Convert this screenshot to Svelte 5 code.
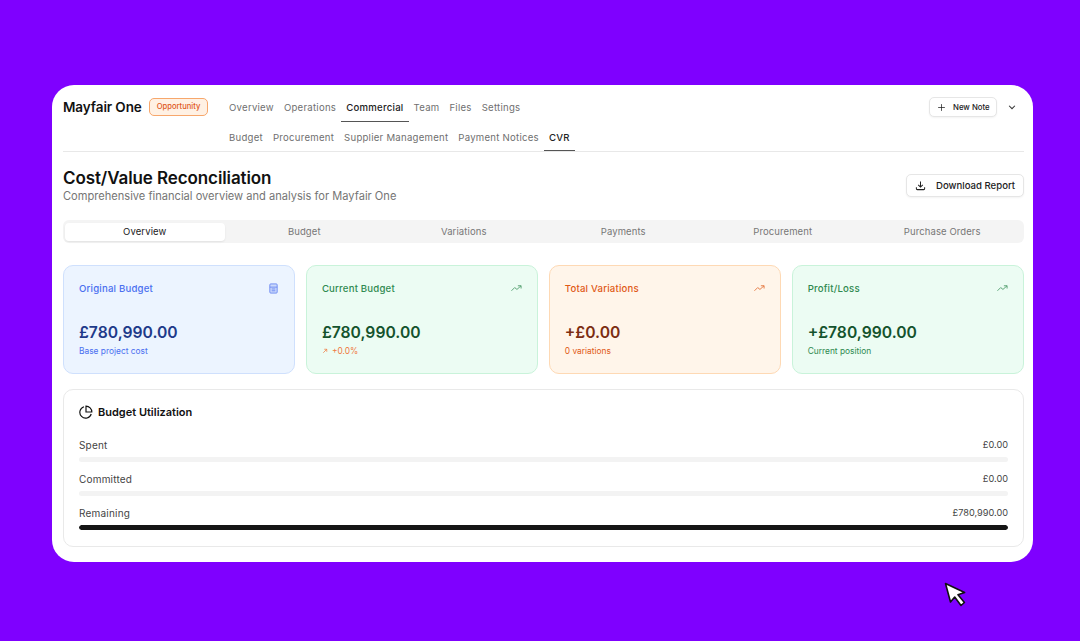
<script lang="ts">
  const mainNav = ['Overview', 'Operations', 'Commercial', 'Team', 'Files', 'Settings']
  const subNav = ['Budget', 'Procurement', 'Supplier Management', 'Payment Notices', 'CVR']
  const tabs = ['Overview', 'Budget', 'Variations', 'Payments', 'Procurement', 'Purchase Orders']

  const stats = [
    { tone: 'blue', label: 'Original Budget', value: '£780,990.00', note: 'Base project cost', icon: 'calc' },
    { tone: 'green', label: 'Current Budget', value: '£780,990.00', note: '+0.0%', icon: 'trend', up: true },
    { tone: 'orange', label: 'Total Variations', value: '+£0.00', note: '0 variations', icon: 'trend' },
    { tone: 'green', label: 'Profit/Loss', value: '+£780,990.00', note: 'Current position', icon: 'trend' }
  ]

  const usage = [
    { label: 'Spent', amount: '£0.00', pct: 0 },
    { label: 'Committed', amount: '£0.00', pct: 0 },
    { label: 'Remaining', amount: '£780,990.00', pct: 100 }
  ]
</script>

<div class="page">
  <main class="panel">
    <header class="top">
      <div class="top-row">
        <strong class="brand">Mayfair One</strong>
        <span class="badge">Opportunity</span>
        <nav class="nav">
          {#each mainNav as item}
            <span class="nav-item" class:active={item === 'Commercial'}>{item}</span>
          {/each}
        </nav>
        <button class="btn note">
          <svg width="9" height="9" viewBox="0 0 24 24" fill="none" stroke="currentColor" stroke-width="2"><path d="M12 3v18M3 12h18" /></svg>
          New Note
        </button>
        <svg class="chev" width="10" height="10" viewBox="0 0 24 24" fill="none" stroke="#333" stroke-width="2.5"><path d="M5 9l7 7 7-7" /></svg>
      </div>
      <nav class="nav sub">
        {#each subNav as item}
          <span class="nav-item" class:active={item === 'CVR'}>{item}</span>
        {/each}
      </nav>
    </header>

    <section class="heading">
      <div>
        <h1>Cost/Value Reconciliation</h1>
        <p>Comprehensive financial overview and analysis for Mayfair One</p>
      </div>
      <button class="btn download">
        <svg width="11" height="11" viewBox="0 0 24 24" fill="none" stroke="currentColor" stroke-width="2.2"><path d="M12 3v12M7 10.5l5 5 5-5M3 16v3a2 2 0 0 0 2 2h14a2 2 0 0 0 2-2v-3" /></svg>
        Download Report
      </button>
    </section>

    <div class="tabs">
      {#each tabs as tab}
        <span class="tab" class:active={tab === 'Overview'}>{tab}</span>
      {/each}
    </div>

    <div class="stats">
      {#each stats as s}
        <article class="stat {s.tone}">
          <div class="stat-head">
            <span>{s.label}</span>
            {#if s.icon === 'calc'}
              <svg class="ico" width="11" height="11" viewBox="0 0 24 24" fill="currentColor" fill-opacity="0.25" stroke="currentColor" stroke-width="2"><rect x="4" y="2" width="16" height="20" rx="2" /><path d="M4 9h16" /><path d="M8 13h8M8 17h8" /></svg>
            {:else}
              <svg class="ico" width="11" height="11" viewBox="0 0 24 24" fill="none" stroke="currentColor" stroke-width="2"><path d="M1 17l7-7 5 4 9-8" /><path d="M15 6h7v6" /></svg>
            {/if}
          </div>
          <div class="stat-value">{s.value}</div>
          <div class="stat-note" class:up={s.up}>
            {#if s.up}
              <svg width="6" height="6" viewBox="0 0 24 24" fill="none" stroke="currentColor" stroke-width="3"><path d="M5 19L19 5M9 5h10v10" /></svg>
            {/if}
            {s.note}
          </div>
        </article>
      {/each}
    </div>

    <section class="usage">
      <h2>
        <svg width="14" height="14" viewBox="0 0 24 24" fill="none" stroke="#111" stroke-width="2"><path d="M21 15.5A10 10 0 1 1 8.5 3" /><path d="M22 12A10 10 0 0 0 12 2v10z" /></svg>
        Budget Utilization
      </h2>
      {#each usage as u}
        <div class="usage-row">
          <div class="usage-text">
            <span class="usage-label">{u.label}</span>
            <span>{u.amount}</span>
          </div>
          <div class="track"><div class="fill" style="width: {u.pct}%"></div></div>
        </div>
      {/each}
    </section>
  </main>

  <svg class="cursor" width="24" height="26" viewBox="0 0 24 26">
    <path d="M1.5 1.5L6.5 20l4.2-5 6.3 8.5 3.4-3-6.4-7.8 6.6-2.2z" fill="#fff" stroke="#111" stroke-width="1.6" stroke-linejoin="round" />
  </svg>
</div>

<style>
  :global(body) {
    margin: 0;
    background: #7f00ff;
  }

  .page {
    position: relative;
    box-sizing: border-box;
    width: 1080px;
    height: 641px;
    padding: 85px 47px 79px 52px;
    background: #7f00ff;
    font-family: Inter, 'Liberation Sans', sans-serif;
    overflow: hidden;
  }

  .panel {
    box-sizing: border-box;
    height: 477px;
    padding: 0 9px 0 11px;
    background: #fff;
    border-radius: 22px;
    color: #111;
  }

  .top {
    height: 67px;
    border-bottom: 1px solid #e8e8e8;
    box-sizing: border-box;
  }

  .top-row {
    display: flex;
    align-items: center;
    box-sizing: border-box;
    height: 37px;
    padding-top: 7px;
  }

  .brand {
    font-size: 13.5px;
    font-weight: 600;
    letter-spacing: -0.1px;
    width: 86px;
    flex: none;
  }

  .badge {
    box-sizing: border-box;
    width: 59px;
    height: 18px;
    line-height: 16px;
    text-align: center;
    font-size: 7.6px;
    font-weight: 500;
    color: #e0581c;
    background: #fff1e4;
    border: 1px solid #f7a76c;
    border-radius: 5px;
    flex: none;
  }

  .nav {
    display: flex;
    height: 30px;
    margin-left: 16px;
    flex: 1;
  }

  .nav-item {
    box-sizing: border-box;
    padding: 10px 5px 0;
    height: 30px;
    font-size: 9.6px;
    line-height: 11px;
    letter-spacing: 0.25px;
    white-space: nowrap;
    color: #6f6f6f;
  }

  .nav-item.active {
    color: #222;
    font-weight: 500;
    border-bottom: 1.5px solid #555;
  }

  .nav.sub {
    margin: 0 0 0 161px;
    height: 29px;
  }

  .nav.sub .nav-item {
    height: 29px;
    padding-top: 10px;
  }

  .btn {
    display: flex;
    align-items: center;
    box-sizing: border-box;
    background: #fff;
    border: 1px solid #e6e6e6;
    border-radius: 5px;
    box-shadow: 0 1px 2px rgba(0, 0, 0, 0.05);
    font-family: inherit;
    color: #222;
    font-weight: 500;
    flex: none;
    padding: 0;
  }

  .note {
    width: 68px;
    height: 20px;
    gap: 7px;
    padding-left: 7px;
    font-size: 7.8px;
  }

  .chev {
    margin: 0 7px 0 10px;
    flex: none;
  }

  .heading {
    display: flex;
    justify-content: space-between;
    align-items: flex-start;
    height: 68px;
    padding-top: 16px;
    box-sizing: border-box;
  }

  h1 {
    margin: 0;
    font-size: 17px;
    line-height: 21px;
    font-weight: 600;
    letter-spacing: -0.1px;
  }

  .heading p {
    margin: 0;
    font-size: 11.1px;
    line-height: 14px;
    color: #757575;
  }

  .download {
    width: 118px;
    height: 23px;
    margin-top: 6px;
    gap: 10px;
    padding-left: 8px;
    font-size: 9.6px;
  }

  .tabs {
    display: grid;
    grid-template-columns: repeat(6, 1fr);
    box-sizing: border-box;
    height: 23px;
    padding: 3px 2px 2px;
    background: #f4f4f4;
    border-radius: 6px;
  }

  .tab {
    text-align: center;
    font-size: 9.5px;
    line-height: 18px;
    letter-spacing: 0.1px;
    color: #777;
    border-radius: 4px;
  }

  .tab.active {
    background: #fff;
    color: #222;
    box-shadow: 0 1px 2px rgba(0, 0, 0, 0.08);
  }

  .stats {
    display: grid;
    grid-template-columns: repeat(4, 1fr);
    gap: 10.5px;
    margin-top: 22px;
  }

  .stat {
    box-sizing: border-box;
    height: 109px;
    padding: 15px;
    border: 1px solid;
    border-radius: 10px;
  }

  .stat.blue {
    background: #ecf4ff;
    border-color: #cfe0fd;
    color: #4a6ff0;
  }

  .stat.green {
    background: #ecfcf3;
    border-color: #c9f3da;
    color: #2f8a50;
  }

  .stat.orange {
    background: #fff5ea;
    border-color: #fed9b4;
    color: #df5a17;
  }

  .stat-head {
    display: flex;
    justify-content: space-between;
    align-items: center;
    height: 14px;
    font-size: 9.6px;
    letter-spacing: 0.2px;
    font-weight: 500;
  }

  .ico {
    opacity: 0.8;
  }

  .stat-value {
    margin-top: 28px;
    font-size: 15.7px;
    line-height: 20px;
    font-weight: 600;
  }

  .blue .stat-value { color: #1e3a8a; }
  .green .stat-value { color: #14532d; }
  .orange .stat-value { color: #7c2d12; }

  .stat-note {
    display: flex;
    align-items: center;
    gap: 4px;
    margin-top: 2px;
    font-size: 8.4px;
    line-height: 12px;
  }

  .stat-note.up {
    color: #f07a3f;
  }

  .usage {
    box-sizing: border-box;
    height: 158px;
    margin-top: 15px;
    padding: 14px 15px;
    border: 1px solid #e9e9e9;
    border-radius: 10px;
  }

  h2 {
    display: flex;
    align-items: center;
    gap: 5px;
    height: 16px;
    margin: 0 0 18px;
    font-size: 11px;
    font-weight: 600;
  }

  .usage-row {
    height: 34px;
  }

  .usage-text {
    display: flex;
    justify-content: space-between;
    height: 19px;
    font-size: 9.2px;
    line-height: 14px;
    color: #444;
  }

  .usage-label {
    font-size: 10px;
    letter-spacing: 0.2px;
  }

  .track {
    height: 5px;
    background: #f3f3f3;
    border-radius: 3px;
    overflow: hidden;
  }

  .fill {
    height: 100%;
    background: #151515;
    border-radius: 3px;
  }

  .cursor {
    position: absolute;
    left: 944px;
    top: 582px;
  }
</style>
